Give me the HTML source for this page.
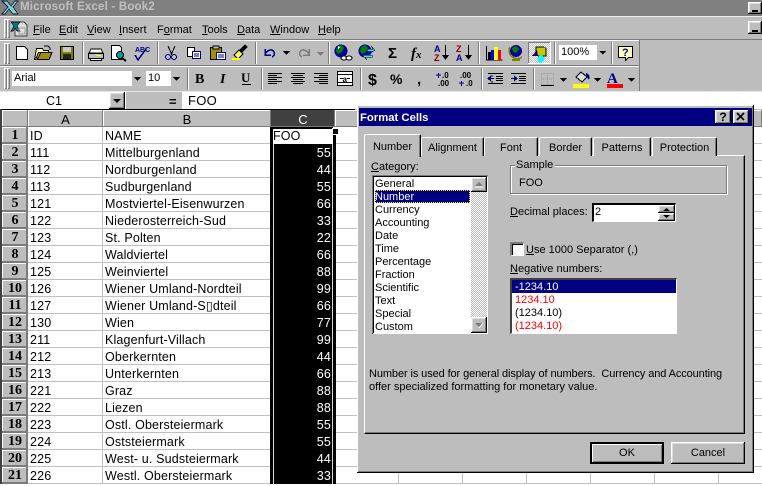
<!DOCTYPE html>
<html><head><meta charset="utf-8"><style>
html,body{margin:0;padding:0}
body{width:762px;height:484px;overflow:hidden;background:#fff;position:relative;font-family:"Liberation Sans",sans-serif;font-size:12px;color:#000}
div,span.t{position:absolute;box-sizing:border-box}
.t{position:absolute;white-space:nowrap;line-height:15px;font-size:11px}
.g{background:#bdbdbd}
.raised{background:#bdbdbd;box-shadow:inset -1px -1px 0 #000,inset 1px 1px 0 #fff,inset -2px -2px 0 #7b7b7b,inset 2px 2px 0 #dedede}
.hd{background:#bdbdbd;box-shadow:inset -1px -1px 0 #7b7b7b,inset 1px 1px 0 #fff;text-align:center;color:#000;font-size:13px;line-height:19px;height:17px}
.rn{left:2px;width:26px;height:17px;background:#bdbdbd;box-shadow:inset -2px -2px 0 #7b7b7b,inset 1px 1px 0 #fff;text-align:center;font:bold 14px/18px "Liberation Serif",serif}
.c{position:absolute;height:17px;line-height:19px;font-size:12.5px;white-space:nowrap;letter-spacing:.15px}
.a{left:30px}.b{left:105px}
.v{left:274px;width:58px;text-align:right;color:#fff;padding-right:1px}
.grip{position:absolute;left:4px;width:3px;background:#bdbdbd;box-shadow:inset 1px 1px 0 #fff,inset -1px -1px 0 #7b7b7b}
.m{position:absolute;top:23px;font-size:11px;line-height:14px;white-space:nowrap}
u{text-decoration:underline}
.sp{position:absolute;width:2px;background:linear-gradient(90deg,#7b7b7b 50%,#fff 50%)}
.tab{background:#bdbdbd;top:137px;height:19px;border-top:1px solid #fff;border-left:1px solid #fff;border-right:1px solid #000;border-radius:2px 2px 0 0;text-align:center;line-height:20px;font-size:11px;box-shadow:inset -1px 0 0 #7b7b7b}
.li{position:absolute;left:3px;font-size:11px;line-height:15px;white-space:nowrap}
.btn{top:442px;height:22px;width:74px;text-align:center;line-height:22px;font-size:11px}
.hatch{background-color:#fff;background-image:linear-gradient(45deg,#bdbdbd 25%,transparent 25%,transparent 75%,#bdbdbd 75%),linear-gradient(45deg,#bdbdbd 25%,transparent 25%,transparent 75%,#bdbdbd 75%);background-size:2px 2px;background-position:0 0,1px 1px}
</style></head><body>

<!-- title bar -->
<div style="left:0;top:0;width:762px;height:16px;background:#808080"></div>
<div class="t" style="left:20px;top:0;height:15px;line-height:15px;color:#c0c0c0;font-weight:bold;font-size:11.5px;letter-spacing:.2px">Microsoft Excel - Book2</div>
<div class="g" style="left:0;top:16px;width:762px;height:94px"></div>
<div style="left:0;top:16px;width:762px;height:1px;background:#efefef"></div>
<div class="raised" style="left:748px;top:2px;width:14px;height:12px"></div>
<div style="left:752px;top:10px;width:6px;height:2px;background:#000"></div>
<div class="raised" style="left:748px;top:21px;width:14px;height:13px"></div>
<div style="left:752px;top:30px;width:6px;height:2px;background:#000"></div>

<!-- toolbar frames -->
<div style="left:0;top:39px;width:762px;height:1px;background:#7b7b7b"></div>
<div style="left:0;top:40px;width:639px;height:1px;background:#fff"></div>
<div style="left:0;top:65px;width:639px;height:1px;background:#7b7b7b"></div>
<div style="left:0;top:66px;width:639px;height:1px;background:#fff"></div>
<div style="left:0;top:91px;width:639px;height:1px;background:#7b7b7b"></div>
<div style="left:639px;top:40px;width:1px;height:52px;background:#7b7b7b"></div>
<div class="grip" style="top:19px;height:19px"></div>
<div class="grip" style="left:7px;top:19px;height:19px"></div>
<div class="grip" style="top:43px;height:21px"></div>
<div class="grip" style="left:7px;top:43px;height:21px"></div>
<div class="grip" style="top:68px;height:21px"></div>
<div class="grip" style="left:7px;top:68px;height:21px"></div>

<!-- menu -->
<span class="m" style="left:33px"><u>F</u>ile</span>
<span class="m" style="left:59px"><u>E</u>dit</span>
<span class="m" style="left:87px"><u>V</u>iew</span>
<span class="m" style="left:119px"><u>I</u>nsert</span>
<span class="m" style="left:157px">F<u>o</u>rmat</span>
<span class="m" style="left:202px"><u>T</u>ools</span>
<span class="m" style="left:237px"><u>D</u>ata</span>
<span class="m" style="left:270px"><u>W</u>indow</span>
<span class="m" style="left:318px"><u>H</u>elp</span>

<!-- separators -->
<div class="sp" style="left:82px;top:42px;height:22px"></div>
<div class="sp" style="left:157px;top:42px;height:22px"></div>
<div class="sp" style="left:255px;top:42px;height:22px"></div>
<div class="sp" style="left:328px;top:42px;height:22px"></div>
<div class="sp" style="left:478px;top:42px;height:22px"></div>
<div class="sp" style="left:554px;top:42px;height:22px"></div>
<div class="sp" style="left:611px;top:42px;height:22px"></div>
<div class="sp" style="left:187px;top:68px;height:22px"></div>
<div class="sp" style="left:261px;top:68px;height:22px"></div>
<div class="sp" style="left:360px;top:68px;height:22px"></div>
<div class="sp" style="left:481px;top:68px;height:22px"></div>
<div class="sp" style="left:533px;top:68px;height:22px"></div>

<!-- font boxes -->
<div style="left:12px;top:71px;width:131px;height:15px;background:#fff"></div>
<div class="t" style="left:14px;top:71px;font-size:11px">Arial</div>
<div style="left:132px;top:71px;width:11px;height:15px;background:#bdbdbd"></div>
<div style="left:146px;top:71px;width:36px;height:15px;background:#fff"></div>
<div class="t" style="left:148px;top:71px;font-size:11px">10</div>
<div style="left:171px;top:71px;width:11px;height:15px;background:#bdbdbd"></div>
<div style="left:559px;top:45px;width:48px;height:15px;background:#fff"></div>
<div class="t" style="left:561px;top:45px;font-size:11px">100%</div>
<div style="left:597px;top:45px;width:10px;height:15px;background:#bdbdbd"></div>
<div class="hatch" style="left:528px;top:42px;width:23px;height:22px;box-shadow:inset -1px -1px 0 #fff,inset 1px 1px 0 #7b7b7b"></div>

<!-- icons -->
<svg style="position:absolute;left:0;top:0" width="762" height="110" viewBox="0 0 762 110">
<g shape-rendering="crispEdges">
<!-- title x logo -->
<path d="M2 1h5l4 5 4-5h3l-5 6 5 7h-5l-4-5-4 5H2l6-7z" fill="#7fd8d8" stroke="#101030" stroke-width=".8"/>
<!-- menu doc -->
<path d="M15 22h9l3 3v11H15z" fill="#dedede" stroke="#404040"/>
<path d="M11 22h9l-3 4 3 5h-3l-2-3-2 3h-2l3-5z" fill="#008080" stroke="#000" stroke-width=".6"/>
<path d="M19 28h6v6h-6z" fill="none" stroke="#9a9a9a"/>
<!-- new -->
<path d="M16.500 46.500h8l3 3v10h-11z" fill="#fff" stroke="#000"/>
<!-- open -->
<path d="M36.500 48.500h6l1 2h5v2h-10l-3 7h-1z" fill="#ffffa0" stroke="#000"/>
<path d="M37 59.500h12l3-7H41z" fill="#a09000" stroke="#000"/>
<path d="M44 46h4l2 2 0 2" fill="none" stroke="#000"/>
<!-- save -->
<path d="M60.500 46.500h13v13h-13z" fill="#808000" stroke="#000"/>
<rect x="63" y="47" width="8" height="5" fill="#c8c8c8"/>
<rect x="63" y="54" width="8" height="5" fill="#222"/>
<!-- print -->
<path d="M91 49h10l2 4H89z" fill="#fff" stroke="#000"/>
<path d="M88.500 53.500h15v5h-15z" fill="#bdbdbd" stroke="#000"/>
<path d="M90.500 58.500h11v2h-11z" fill="#fff" stroke="#000"/>
<rect x="96" y="55" width="5" height="1" fill="#ff0"/>
<!-- preview -->
<path d="M111.500 45.500h8l2 2v12h-10z" fill="#fff" stroke="#000"/>
<circle cx="120" cy="55" r="3.500" fill="#00a0a0" stroke="#000"/>
<path d="M122 58l4 3" stroke="#000" stroke-width="2"/>
<!-- spell -->
<text x="135" y="52" font-family="Liberation Sans" font-size="7" font-weight="bold" fill="#000080">ABC</text>
<path d="M135 55l3 5 8-11" fill="none" stroke="#000080" stroke-width="1.500"/>
<!-- cut -->
<path d="M168 46l4 9M175 46l-4 9" stroke="#000" fill="none"/>
<circle cx="168" cy="57" r="2.500" fill="none" stroke="#000080"/>
<circle cx="174" cy="57" r="2.500" fill="none" stroke="#000080"/>
<!-- copy -->
<path d="M187.500 47.500h7v9h-7z" fill="#fff" stroke="#000"/>
<path d="M192.500 51.500h8v7h-8z" fill="#fff" stroke="#000080"/>
<path d="M194 54h5M194 56h5" stroke="#000080"/>
<!-- paste -->
<path d="M210.500 47.500h11v12h-11z" fill="#a09000" stroke="#000"/>
<path d="M213 46h6v3h-6z" fill="#bdbdbd" stroke="#000"/>
<path d="M216.500 52.500h9v7h-9z" fill="#fff" stroke="#000080"/>
<path d="M218 55h6M218 57h6" stroke="#000080"/>
<!-- brush -->
<path d="M234 55l5-5 4 4-5 5z" fill="#ffff60" stroke="#000"/>
<path d="M240 50l5-5 2 2-5 5z" fill="#000" stroke="#000"/>
<path d="M232 59h8" stroke="#ffff00" stroke-width="2"/>
<!-- undo/redo -->
<path d="M265 49v6h6M265 54c3-5 8-5 9-2 1 2 0 4-2 5" fill="none" stroke="#000080" stroke-width="1.500"/>
<path d="M283 51h7l-3.500 4z" fill="#000"/>
<path d="M309 49v6h-6M309 54c-3-5-8-5-9-2-1 2 0 4 2 5" fill="none" stroke="#7b7b7b" stroke-width="1.500"/>
<path d="M317 52h7l-3.500 4z" fill="#7b7b7b"/>
<!-- web -->
<circle cx="341" cy="51" r="6.500" fill="#0000a0"/>
<path d="M337 47l4-2 3 3-2 4-4 2-2-3z" fill="#008000"/><path d="M338 46l2 1-2 2z" fill="#fff"/>
<ellipse cx="344" cy="58" rx="3" ry="2" fill="#fff" stroke="#000"/><ellipse cx="349" cy="58" rx="3" ry="2" fill="#fff" stroke="#000"/>
<circle cx="365" cy="51" r="6.500" fill="#0000a0"/>
<path d="M361 47l4-2 3 3-2 4-4 2-2-3z" fill="#008000"/>
<path d="M367 49h6l-2-3 4 4-4 3 2-2h-6zM372 55h-7l2-2-4 3 4 4-2-3h7z" fill="#00ffff" stroke="#000" stroke-width=".5"/>
</g>
<text x="388" y="58" font-family="Liberation Sans" font-size="15" font-weight="bold" fill="#000">Σ</text>
<text x="411" y="58" font-family="Liberation Serif" font-size="15" font-weight="bold" font-style="italic" fill="#000">f<tspan font-size="11">x</tspan></text>
<g shape-rendering="crispEdges">
<text x="434" y="52" font-family="Liberation Sans" font-size="9" font-weight="bold" fill="#000080">A</text>
<text x="434" y="61" font-family="Liberation Sans" font-size="9" font-weight="bold" fill="#800000">Z</text>
<path d="M445.500 45v13" stroke="#000"/><path d="M442 55h7l-3.500 5z" fill="#000"/>
<text x="456" y="52" font-family="Liberation Sans" font-size="9" font-weight="bold" fill="#800000">Z</text>
<text x="456" y="61" font-family="Liberation Sans" font-size="9" font-weight="bold" fill="#000080">A</text>
<path d="M468.500 45v13" stroke="#000"/><path d="M465 55h7l-3.500 5z" fill="#000"/>
<!-- chart -->
<path d="M486.500 46v14h16" fill="none" stroke="#000"/>
<path d="M488 52h3v8h-3z" fill="#000"/><path d="M491 50h3v10h-3z" fill="#0000ff"/><path d="M494 47h4v13h-4z" fill="#ffff00"/><path d="M498 50h3v10h-3z" fill="#ff0000"/>
<!-- map -->
<circle cx="516" cy="51" r="6" fill="#0000a0"/><path d="M512 48l4-2 3 3-3 4-3-1z" fill="#008000"/>
<path d="M510 47a8 8 0 0 0 12 10" fill="none" stroke="#808000" stroke-width="1.500"/>
<path d="M512 60h8" stroke="#808000" stroke-width="2"/>
<!-- drawing -->
<path d="M536 47h8l2 1v8h-8l-2-1z" fill="#c8c800" stroke="#000" stroke-width=".6"/>
<circle cx="541" cy="59" r="3.500" fill="#00ffff"/>
<path d="M537 50l-5 6h6z" fill="#000080"/>
<!-- zoom arrow -->
<path d="M599 51h7l-3.500 3.500z" fill="#000"/>
<!-- help -->
<path d="M618.500 46.500h14v11h-4l-3 3v-3h-7z" fill="#ffffc0" stroke="#000"/>
<text x="622" y="56" font-family="Liberation Sans" font-size="11" font-weight="bold" fill="#000080">?</text>
<!-- combo arrows -->
<path d="M134 77h7l-3.500 4z" fill="#000"/>
<path d="M173 77h7l-3.500 4z" fill="#000"/>
</g>
<text x="195" y="83" font-family="Liberation Serif" font-size="14" font-weight="bold">B</text>
<text x="220" y="83" font-family="Liberation Serif" font-size="14" font-weight="bold" font-style="italic">I</text>
<text x="241" y="82" font-family="Liberation Serif" font-size="13" font-weight="bold">U</text>
<g shape-rendering="crispEdges">
<path d="M242 84.500h9" stroke="#000"/>
<path d="M268 73.500h14M268 75.500h9M268 77.500h14M268 79.500h9M268 81.500h14M268 83.500h9" stroke="#000"/>
<path d="M291 73.500h14M293 75.500h10M291 77.500h14M293 79.500h10M291 81.500h14M293 83.500h10" stroke="#000"/>
<path d="M314 73.500h14M319 75.500h9M314 77.500h14M319 79.500h9M314 81.500h14M319 83.500h9" stroke="#000"/>
<path d="M337.500 71.500h15v14h-15z" fill="#fff" stroke="#000"/>
<path d="M338 74.500h14M338 82.500h14" stroke="#000"/>
<path d="M340 78.500h3M347 78.500h3" stroke="#000"/>
</g>
<text x="342.500" y="82" font-family="Liberation Sans" font-size="8" font-weight="bold">a</text>
<text x="368" y="85" font-family="Liberation Sans" font-size="16" font-weight="bold">$</text>
<text x="390" y="84" font-family="Liberation Sans" font-size="14" font-weight="bold">%</text>
<text x="417" y="84" font-family="Liberation Sans" font-size="15" font-weight="bold">,</text>
<g shape-rendering="crispEdges">
<path d="M436 75h5M438.500 73v5" stroke="#000080"/>
<text x="442" y="78" font-family="Liberation Sans" font-size="8" font-weight="bold">.0</text>
<text x="438" y="86" font-family="Liberation Sans" font-size="8" font-weight="bold">.00</text>
<path d="M459 83h5M461.500 81v5" stroke="#000080"/>
<text x="460" y="78" font-family="Liberation Sans" font-size="8" font-weight="bold">.00</text>
<text x="466" y="86" font-family="Liberation Sans" font-size="8" font-weight="bold">.0</text>
<path d="M488 73.500h15M496 76.500h7M496 78.500h7M496 80.500h7M488 83.500h15M492 75v2M492 81v2" stroke="#000"/>
<path d="M487 78.500l4-3v6zM489 78h5v1h-5z" fill="#000080"/>
<path d="M511 73.500h15M519 76.500h7M519 78.500h7M519 80.500h7M511 83.500h15" stroke="#000"/>
<path d="M518 78.500l-4-3v6zM516 78h-5v1h5z" fill="#000080"/>
<path d="M541.500 73.500h12v11h-12zM547.500 73v11M541 79h12" fill="none" stroke="#9a9a9a" stroke-dasharray="1 1"/>
<path d="M541 85.500h13" stroke="#000"/>
<path d="M560 78h7l-3.500 4z" fill="#000"/>
<path d="M576 77l5-5 6 5-5 5z" fill="#dedede" stroke="#000"/>
<path d="M586 74c3 1 3 4 2 5" stroke="#000080" stroke-width="2" fill="none"/>
<rect x="573" y="84" width="16" height="4" fill="#ffff00"/>
<path d="M594 78h7l-3.500 4z" fill="#000"/>
<rect x="607" y="84" width="16" height="4" fill="#ff0000"/>
<path d="M628 78h7l-3.500 4z" fill="#000"/>
</g>
<text x="607" y="83" font-family="Liberation Serif" font-size="15" font-weight="bold" fill="#000080">A</text>
</svg>

<!-- formula bar -->
<div style="left:0;top:92px;width:762px;height:17px;background:#fff"></div>
<div style="left:0;top:91px;width:762px;height:1px;background:#e8e8e8"></div>
<div class="t" style="left:0;top:94px;width:108px;text-align:center;font-size:12.5px">C1</div>
<div class="raised" style="left:109px;top:92px;width:16px;height:17px"></div>
<svg style="position:absolute;left:109px;top:92px" width="16" height="17"><path d="M4 7h8l-4 4z" fill="#000"/></svg>
<div class="g" style="left:126px;top:92px;width:56px;height:17px"></div>
<div class="t" style="left:169px;top:94px;font-weight:bold;font-size:13px">=</div>
<div class="t" style="left:188px;top:93px;font-size:13px;letter-spacing:.3px">FOO</div>
<div style="left:0;top:109px;width:355px;height:1px;background:#000"></div>

<!-- sheet -->
<div style="left:0;top:109px;width:2px;height:375px;background:#404040"></div>
<div class="hd" style="left:2px;top:110px;width:26px"></div>
<div class="hd" style="left:28px;top:110px;width:75px">A</div>
<div class="hd" style="left:103px;top:110px;width:168px">B</div>
<div class="hd" style="left:271px;top:110px;width:64px;background:#404040;color:#fff;box-shadow:inset -1px -1px 0 #7b7b7b">C</div>
<div class="hd" style="left:335px;top:110px;width:64px"></div>
<div class="hd" style="left:399px;top:110px;width:363px"></div>

<!-- grid -->
<div style="left:28px;top:127px;width:734px;height:357px;background-image:linear-gradient(#c0c0c0 1px,transparent 1px);background-size:100% 17px;background-position:0 16px"></div>
<div style="left:102px;top:127px;width:1px;height:357px;background:#c0c0c0"></div>
<div style="left:398px;top:127px;width:1px;height:357px;background:#c0c0c0"></div>
<div style="left:462px;top:127px;width:1px;height:357px;background:#c0c0c0"></div>
<div style="left:526px;top:127px;width:1px;height:357px;background:#c0c0c0"></div>
<div style="left:590px;top:127px;width:1px;height:357px;background:#c0c0c0"></div>
<div style="left:654px;top:127px;width:1px;height:357px;background:#c0c0c0"></div>
<div style="left:718px;top:127px;width:1px;height:357px;background:#c0c0c0"></div>

<!-- selection -->
<div style="left:270px;top:127px;width:66px;height:357px;background:#000"></div>
<div style="left:273px;top:144px;width:1px;height:340px;background:#d8d8d8"></div>
<div style="left:332px;top:144px;width:1px;height:340px;background:#d8d8d8"></div>
<div style="left:273px;top:129px;width:60px;height:15px;background:#fff"></div>
<div style="left:333px;top:127px;width:3px;height:2px;background:#fff"></div>
<div style="left:333px;top:129px;width:5px;height:5px;background:#000;box-shadow:0 0 0 1px #fff"></div>

<!-- row numbers -->
<div class="rn" style="top:127px">1</div><div class="rn" style="top:144px">2</div><div class="rn" style="top:161px">3</div><div class="rn" style="top:178px">4</div><div class="rn" style="top:195px">5</div><div class="rn" style="top:212px">6</div><div class="rn" style="top:229px">7</div><div class="rn" style="top:246px">8</div><div class="rn" style="top:263px">9</div><div class="rn" style="top:280px">10</div><div class="rn" style="top:297px">11</div><div class="rn" style="top:314px">12</div><div class="rn" style="top:331px">13</div><div class="rn" style="top:348px">14</div><div class="rn" style="top:365px">15</div><div class="rn" style="top:382px">16</div><div class="rn" style="top:399px">17</div><div class="rn" style="top:416px">18</div><div class="rn" style="top:433px">19</div><div class="rn" style="top:450px">20</div><div class="rn" style="top:467px">21</div>

<!-- cells -->
<div class="c a" style="top:127px">ID</div><div class="c b" style="top:127px">NAME</div><div class="c" style="left:273px;top:127px">FOO</div>
<div class="c a" style="top:144px">111</div><div class="c b" style="top:144px">Mittelburgenland</div><div class="c v" style="top:144px">55</div>
<div class="c a" style="top:161px">112</div><div class="c b" style="top:161px">Nordburgenland</div><div class="c v" style="top:161px">44</div>
<div class="c a" style="top:178px">113</div><div class="c b" style="top:178px">Sudburgenland</div><div class="c v" style="top:178px">55</div>
<div class="c a" style="top:195px">121</div><div class="c b" style="top:195px">Mostviertel-Eisenwurzen</div><div class="c v" style="top:195px">66</div>
<div class="c a" style="top:212px">122</div><div class="c b" style="top:212px">Niederosterreich-Sud</div><div class="c v" style="top:212px">33</div>
<div class="c a" style="top:229px">123</div><div class="c b" style="top:229px">St. Polten</div><div class="c v" style="top:229px">22</div>
<div class="c a" style="top:246px">124</div><div class="c b" style="top:246px">Waldviertel</div><div class="c v" style="top:246px">66</div>
<div class="c a" style="top:263px">125</div><div class="c b" style="top:263px">Weinviertel</div><div class="c v" style="top:263px">88</div>
<div class="c a" style="top:280px">126</div><div class="c b" style="top:280px">Wiener Umland-Nordteil</div><div class="c v" style="top:280px">99</div>
<div class="c a" style="top:297px">127</div><div class="c b" style="top:297px">Wiener Umland-S▯dteil</div><div class="c v" style="top:297px">66</div>
<div class="c a" style="top:314px">130</div><div class="c b" style="top:314px">Wien</div><div class="c v" style="top:314px">77</div>
<div class="c a" style="top:331px">211</div><div class="c b" style="top:331px">Klagenfurt-Villach</div><div class="c v" style="top:331px">99</div>
<div class="c a" style="top:348px">212</div><div class="c b" style="top:348px">Oberkernten</div><div class="c v" style="top:348px">44</div>
<div class="c a" style="top:365px">213</div><div class="c b" style="top:365px">Unterkernten</div><div class="c v" style="top:365px">66</div>
<div class="c a" style="top:382px">221</div><div class="c b" style="top:382px">Graz</div><div class="c v" style="top:382px">88</div>
<div class="c a" style="top:399px">222</div><div class="c b" style="top:399px">Liezen</div><div class="c v" style="top:399px">88</div>
<div class="c a" style="top:416px">223</div><div class="c b" style="top:416px">Ostl. Obersteiermark</div><div class="c v" style="top:416px">55</div>
<div class="c a" style="top:433px">224</div><div class="c b" style="top:433px">Oststeiermark</div><div class="c v" style="top:433px">55</div>
<div class="c a" style="top:450px">225</div><div class="c b" style="top:450px">West- u. Sudsteiermark</div><div class="c v" style="top:450px">44</div>
<div class="c a" style="top:467px">226</div><div class="c b" style="top:467px">Westl. Obersteiermark</div><div class="c v" style="top:467px">33</div>

<!-- dialog -->
<div style="left:357px;top:105px;width:397px;height:368px;background:#bdbdbd;box-shadow:inset -1px -1px 0 #000,inset 1px 1px 0 #fff,inset -2px -2px 0 #7b7b7b"></div>
<div style="left:359px;top:108px;width:393px;height:18px;background:#000080"></div>
<div class="t" style="left:360px;top:111px;color:#fff;font-weight:bold;font-size:11.3px">Format Cells</div>
<div class="raised" style="left:715px;top:110px;width:16px;height:14px;text-align:center;font:bold 12px/14px 'Liberation Sans',sans-serif">?</div>
<div class="raised" style="left:733px;top:110px;width:16px;height:14px"></div>
<svg style="position:absolute;left:733px;top:110px" width="16" height="14"><path d="M4 3l7 7M11 3l-7 7" stroke="#000" stroke-width="1.600"/></svg>

<!-- panel -->
<div style="left:364px;top:155px;width:381px;height:279px;background:#bdbdbd;border-top:1px solid #fff;border-left:1px solid #fff;border-right:1px solid #000;border-bottom:1px solid #000;box-shadow:inset -1px -1px 0 #7b7b7b"></div>
<div class="tab" style="left:421px;width:63px">Alignment</div>
<div class="tab" style="left:484px;width:54px">Font</div>
<div class="tab" style="left:539px;width:53px">Border</div>
<div class="tab" style="left:593px;width:58px">Patterns</div>
<div class="tab" style="left:652px;width:65px">Protection</div>
<div class="tab" style="left:364px;top:134px;width:57px;height:23px;line-height:24px">Number</div>

<span class="t" style="left:371px;top:160px"><u>C</u>ategory:</span>

<!-- category list -->
<div style="left:372px;top:175px;width:116px;height:159px;background:#fff;border-top:2px solid #000;border-left:2px solid #000;border-right:1px solid #fff;border-bottom:1px solid #fff"></div>
<div style="left:372px;top:175px;width:116px;height:1px;background:#7b7b7b"></div>
<div style="left:372px;top:175px;width:1px;height:158px;background:#7b7b7b"></div>
<div style="left:374px;top:177px;width:97px;height:156px">
<span class="li" style="left:1px;top:0">General</span>
<div style="left:1px;top:13px;width:95px;height:13px;background:#000080;outline:1px dotted #ffff00;outline-offset:-1px"></div>
<span class="li" style="left:1px;top:13px;color:#fff">Number</span>
<span class="li" style="left:1px;top:26px">Currency</span>
<span class="li" style="left:1px;top:39px">Accounting</span>
<span class="li" style="left:1px;top:52px">Date</span>
<span class="li" style="left:1px;top:65px">Time</span>
<span class="li" style="left:1px;top:78px">Percentage</span>
<span class="li" style="left:1px;top:91px">Fraction</span>
<span class="li" style="left:1px;top:104px">Scientific</span>
<span class="li" style="left:1px;top:117px">Text</span>
<span class="li" style="left:1px;top:130px">Special</span>
<span class="li" style="left:1px;top:143px">Custom</span>
</div>
<div class="hatch" style="left:471px;top:177px;width:16px;height:156px"></div>
<div class="raised" style="left:471px;top:177px;width:16px;height:15px"></div>
<div class="raised" style="left:471px;top:317px;width:16px;height:16px"></div>
<svg style="position:absolute;left:471px;top:177px" width="16" height="156"><path d="M4 9h8l-4-4z" fill="#7b7b7b"/><path d="M4 146h8l-4 4z" fill="#7b7b7b"/><path d="M4 10h8M8 151l4-5" stroke="#fff"/></svg>

<!-- sample -->
<div style="left:510px;top:165px;width:217px;height:29px;border:1px solid #7b7b7b;box-shadow:1px 1px 0 #fff,inset 1px 1px 0 #fff"></div>
<span class="t" style="left:515px;top:159px;height:13px;line-height:13px;background:#bdbdbd;padding:0 2px 0 1px">Sample</span>
<span class="t" style="left:519px;top:176px">FOO</span>

<!-- decimal -->
<span class="t" style="left:510px;top:205px"><u>D</u>ecimal places:</span>
<div style="left:592px;top:203px;width:84px;height:19px;background:#fff;border-top:2px solid #000;border-left:2px solid #000;border-right:1px solid #fff;border-bottom:1px solid #fff"></div>
<span class="t" style="left:595px;top:205px">2</span>
<div class="raised" style="left:658px;top:205px;width:17px;height:8px"></div>
<div class="raised" style="left:658px;top:213px;width:17px;height:8px"></div>
<svg style="position:absolute;left:658px;top:205px" width="17" height="16"><path d="M5 6h7l-3.500-3zM5 10h7l-3.500 3z" fill="#000"/></svg>

<!-- checkbox -->
<div style="left:510px;top:242px;width:14px;height:14px;background:#fff;border-top:2px solid #7b7b7b;border-left:2px solid #7b7b7b;border-right:1px solid #fff;border-bottom:1px solid #fff;box-shadow:inset 1px 1px 0 #000"></div>
<span class="t" style="left:526px;top:243px"><u>U</u>se 1000 Separator (,)</span>

<span class="t" style="left:510px;top:262px"><u>N</u>egative numbers:</span>
<div style="left:510px;top:278px;width:167px;height:56px;background:#fff;border-top:2px solid #404040;border-left:2px solid #404040;border-right:1px solid #fff;border-bottom:1px solid #fff"></div>
<div style="left:512px;top:280px;width:164px;height:13px;background:#000080"></div>
<span class="t" style="left:515px;top:280px;color:#fff">-1234.10</span>
<span class="t" style="left:515px;top:293px;color:#f00">1234.10</span>
<span class="t" style="left:515px;top:306px">(1234.10)</span>
<span class="t" style="left:515px;top:319px;color:#f00">(1234.10)</span>

<!-- description -->
<span class="t" style="left:369px;top:367px;letter-spacing:-.1px">Number is used for general display of numbers.&nbsp; Currency and Accounting</span>
<span class="t" style="left:369px;top:380px">offer specialized formatting for monetary value.</span>

<!-- buttons -->
<div class="btn raised" style="left:590px;box-shadow:inset -2px -2px 0 #000,inset 2px 2px 0 #000,inset 3px 3px 0 #fff,inset -3px -3px 0 #7b7b7b">OK</div>
<div class="btn raised" style="left:671px">Cancel</div>

</body></html>
